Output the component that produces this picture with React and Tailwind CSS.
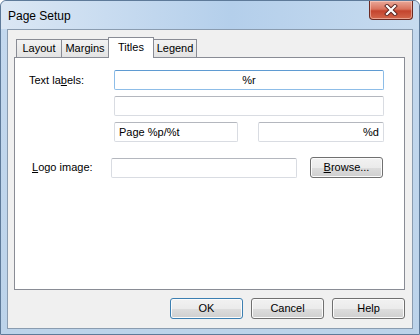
import React from 'react';

const btn =
  "h-[21px] w-[73px] rounded-[3px] border text-[11px] text-black flex items-center justify-center " +
  "bg-[linear-gradient(to_bottom,#f2f2f2_0%,#ebebeb_50%,#dddddd_51%,#cfcfcf_100%)] shadow-[inset_0_0_0_1px_#fbfbfb]";

const field =
  "h-[20px] rounded-[2px] border border-[#d9dce2] border-t-[#b4b7be] bg-white text-[11px] text-black flex items-center px-[4px]";

function Tab({ label, active, w }) {
  if (active) {
    return (
      <div
        className={`relative z-10 -mb-px -ml-px h-[21px] ${w} bg-white border border-b-0 border-[#898c95] flex items-start justify-center pt-[1px] text-[11px]`}
      >
        {label}
      </div>
    );
  }
  return (
    <div
      className={`-ml-px first:ml-0 h-[18px] ${w} border border-b-0 border-[#898c95] bg-[linear-gradient(to_bottom,#f3f3f3,#e3e3e3)] flex items-center justify-center text-[11px]`}
    >
      {label}
    </div>
  );
}

export default function App() {
  return (
    <div className="w-[420px] h-[335px] font-['Liberation_Sans',Arial,sans-serif] text-black select-none">
      <div className="w-[420px] h-[335px] rounded-t-[6px] border border-[#5e7a99] bg-[linear-gradient(to_bottom,#dae7f5_0px,#c3d8ee_30px,#bcd3ea_100%)] flex flex-col">
        {/* ── Title bar ─────────────────────────────────────────── */}
        <div className="h-[28px] flex justify-between shrink-0 bg-[linear-gradient(to_right,#dbe7f4_0%,#c9dcf0_25%,#b4cfeb_55%,#c7dbef_100%)] rounded-t-[6px]">
          <span className="pl-[7px] pt-[6px] text-[12px] text-black">Page Setup</span>
          <div className="mr-[6px] w-[44px] h-[19px] rounded-b-[4px] border border-t-0 border-[#6b2a22] bg-[linear-gradient(to_bottom,#e9a899_0%,#d9735d_45%,#c4442e_55%,#d3674c_100%)] shadow-[inset_0_0_0_1px_rgba(255,220,210,0.5)] flex items-center justify-center">
            <svg width="14" height="12" viewBox="0 0 14 12">
              <path d="M3 2 L11 10 M11 2 L3 10" stroke="#5a2420" strokeWidth="4" strokeLinecap="square" />
              <path d="M3 2 L11 10 M11 2 L3 10" stroke="#ffffff" strokeWidth="2.2" strokeLinecap="square" />
            </svg>
          </div>
        </div>

        {/* ── Client area ───────────────────────────────────────── */}
        <div className="mx-[6px] h-[300px] border border-[#8a9cb0] bg-[#f0f0f0] flex flex-col px-[6px]">
          {/* tabs */}
          <div className="flex items-end h-[27px] pl-[2px] shrink-0">
            <Tab label="Layout" w="w-[46px]" />
            <Tab label="Margins" w="w-[48px]" />
            <Tab label="Titles" w="w-[46px]" active />
            <Tab label="Legend" w="w-[44px]" />
          </div>

          {/* panel */}
          <div className="w-[391px] h-[233px] border border-[#898c95] bg-white pl-[14px] pt-[12px] text-[11px] flex flex-col">
            <div className="flex items-center">
              <span className="w-[85px]">
                Text la<span className="underline">b</span>els:
              </span>
              <div className="h-[20px] w-[270px] rounded-[2px] border border-[#8dbde8] border-t-[#5f9bd2] bg-white flex items-center justify-center">
                %r
              </div>
            </div>
            <div className="mt-[6px] ml-[85px]">
              <div className={`${field} w-[270px]`} />
            </div>
            <div className="mt-[6px] ml-[85px] flex gap-[20px]">
              <div className={`${field} w-[124px]`}>Page %p/%t</div>
              <div className={`${field} w-[126px] justify-end`}>%d</div>
            </div>
            <div className="mt-[15px] flex items-center">
              <span className="w-[82px] pl-[3px]">
                <span className="underline">L</span>ogo image:
              </span>
              <div className={`${field} w-[186px]`} />
              <button className={`${btn} ml-[13px] border-[#707070]`}>
                <span className="underline">B</span>rowse...
              </button>
            </div>
          </div>

          {/* buttons */}
          <div className="mt-[8px] flex justify-end gap-[8px] pr-[1px]">
            <button className={`${btn} border-[#3c7fb1] shadow-[inset_0_0_0_1px_#bfe3f7]`}>OK</button>
            <button className={`${btn} border-[#707070]`}>Cancel</button>
            <button className={`${btn} border-[#707070]`}>Help</button>
          </div>
        </div>
      </div>
    </div>
  );
}
